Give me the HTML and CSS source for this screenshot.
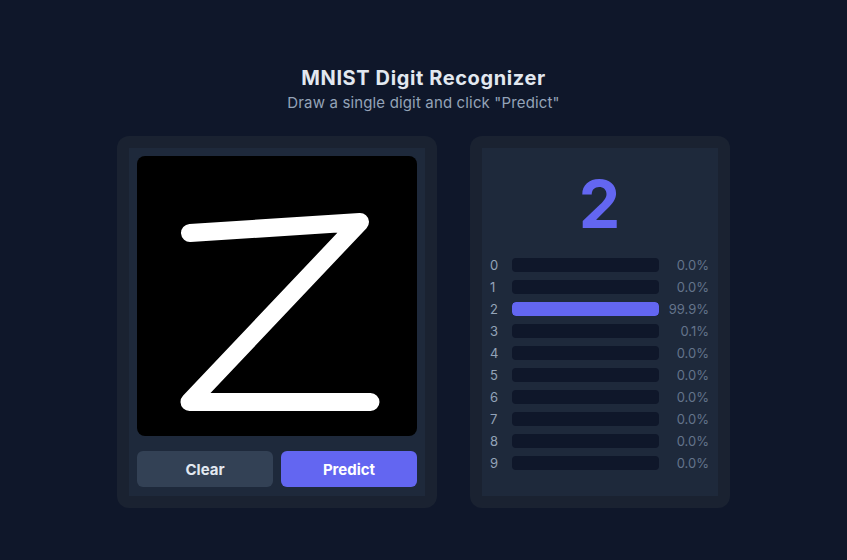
FILE: index.html
```html
<!DOCTYPE html>
<html lang="en">
<head>
<meta charset="utf-8">
<title>MNIST Digit Recognizer</title>
<link rel="stylesheet" href="styles.css">
</head>
<body>
<div class="app">
  <h1 class="title">MNIST Digit Recognizer</h1>
  <p class="subtitle">Draw a single digit and click "Predict"</p>
  <div class="cards">
    <div class="card card-draw">
      <div class="panel panel-draw">
        <div class="canvas">
          <svg viewBox="0 0 280 280" width="280" height="280">
            <polyline points="53,77 223,66 52.5,246 233.5,246" fill="none" stroke="#fff" stroke-width="18" stroke-linecap="round" stroke-linejoin="round"/>
          </svg>
        </div>
        <div class="buttons">
          <button class="btn btn-clear">Clear</button>
          <button class="btn btn-predict">Predict</button>
        </div>
      </div>
    </div>
    <div class="card card-result">
      <div class="panel panel-result">
        <div class="digit">2</div>
        <div class="rows">
          <div class="row"><span class="label">0</span><span class="bar"><span class="fill" style="width:0%"></span></span><span class="pct">0.0%</span></div>
          <div class="row"><span class="label">1</span><span class="bar"><span class="fill" style="width:0%"></span></span><span class="pct">0.0%</span></div>
          <div class="row"><span class="label">2</span><span class="bar"><span class="fill" style="width:99.9%"></span></span><span class="pct">99.9%</span></div>
          <div class="row"><span class="label">3</span><span class="bar"><span class="fill" style="width:0%"></span></span><span class="pct">0.1%</span></div>
          <div class="row"><span class="label">4</span><span class="bar"><span class="fill" style="width:0%"></span></span><span class="pct">0.0%</span></div>
          <div class="row"><span class="label">5</span><span class="bar"><span class="fill" style="width:0%"></span></span><span class="pct">0.0%</span></div>
          <div class="row"><span class="label">6</span><span class="bar"><span class="fill" style="width:0%"></span></span><span class="pct">0.0%</span></div>
          <div class="row"><span class="label">7</span><span class="bar"><span class="fill" style="width:0%"></span></span><span class="pct">0.0%</span></div>
          <div class="row"><span class="label">8</span><span class="bar"><span class="fill" style="width:0%"></span></span><span class="pct">0.0%</span></div>
          <div class="row"><span class="label">9</span><span class="bar"><span class="fill" style="width:0%"></span></span><span class="pct">0.0%</span></div>
        </div>
      </div>
    </div>
  </div>
</div>
</body>
</html>
```

FILE: styles.css
```css
* { box-sizing: border-box; }
html, body {
  margin: 0;
  padding: 0;
  background: #0f172a;
  font-family: Inter, "Noto Sans", "Liberation Sans", sans-serif;
  color: #e2e8f0;
}
.app {
  display: flex;
  flex-direction: column;
  align-items: center;
  padding-top: 64px;
}
.title {
  margin: 0;
  font-size: 20px;
  line-height: 28px;
  font-weight: 700;
  letter-spacing: 0.6px;
  color: #e2e8f0;
}
.subtitle {
  margin: 0;
  font-size: 15px;
  line-height: 22px;
  letter-spacing: 0.15px;
  color: #94a3b8;
}
.cards {
  display: flex;
  gap: 33px;
  margin-top: 22px;
  align-items: stretch;
}
.card {
  background: #1a2231;
  border-radius: 12px;
  padding: 12px;
  display: flex;
}
.card-draw { width: 320px; }
.card-result { width: 260px; }
.panel {
  background: #1e293b;
  flex: 1;
}
.panel-draw {
  padding: 8px 8px 9px 8px;
}
.canvas {
  width: 280px;
  height: 280px;
  background: #000;
  border-radius: 8px;
  overflow: hidden;
}
.canvas svg { display: block; }
.buttons {
  display: flex;
  gap: 8px;
  margin-top: 15px;
}
.btn {
  flex: 1;
  height: 36px;
  border: none;
  border-radius: 6px;
  font-family: inherit;
  font-size: 15px;
  font-weight: 700;
  padding-top: 2px;
  cursor: pointer;
}
.btn-clear { background: #334155; color: #e2e8f0; }
.btn-predict { background: #6366f1; color: #fff; }
.panel-result {
  padding: 23px 9px 0 8px;
}
.digit {
  text-align: center;
  font-size: 66px;
  line-height: 66px;
  height: 66px;
  font-weight: 700;
  color: #6366f1;
  margin-bottom: 20px;
}
.rows {
  display: flex;
  flex-direction: column;
  gap: 8px;
}
.row {
  display: grid;
  grid-template-columns: 16px 1fr 44px;
  column-gap: 6px;
  align-items: center;
  height: 14px;
  font-size: 13px;
}
.label { color: #94a3b8; }
.bar {
  display: block;
  height: 14px;
  background: #0f172a;
  border-radius: 4px;
  overflow: hidden;
}
.fill {
  display: block;
  height: 100%;
  background: #6366f1;
  border-radius: 4px;
}
.pct {
  text-align: right;
  color: #64748b;
}
```
